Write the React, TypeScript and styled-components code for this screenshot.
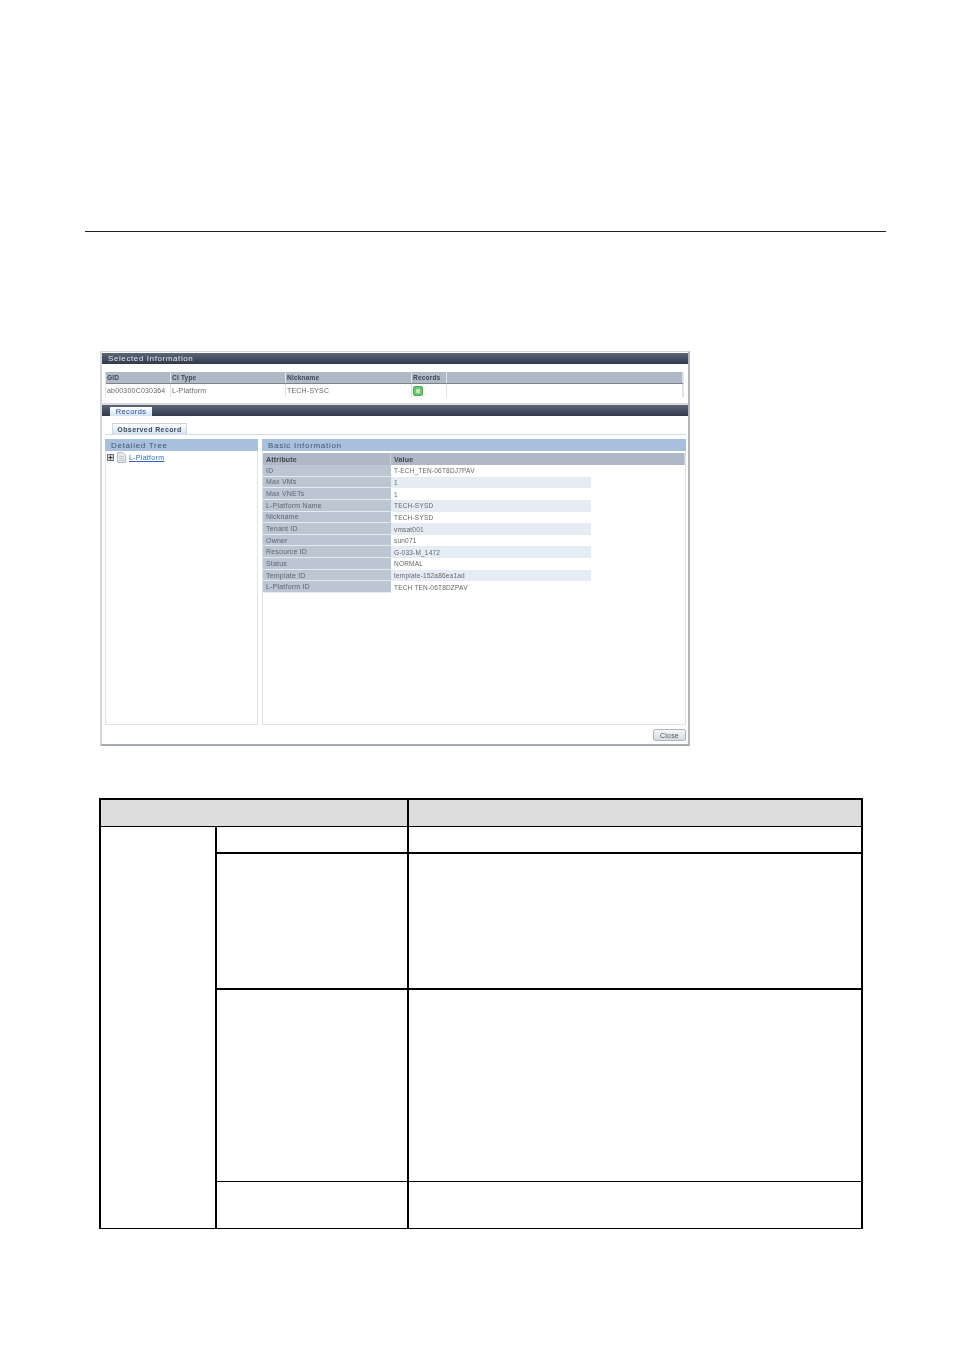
import React from "react";
import styled, { createGlobalStyle } from "styled-components";

const GlobalStyle = createGlobalStyle`
  html, body {
    margin: 0;
    padding: 0;
    background: #fff;
  }
`;

const Page = styled.div`
  width: 954px;
  height: 1350px;
  padding-top: 231px;
  box-sizing: border-box;
  overflow: hidden;
  font-family: "Liberation Sans", Arial, sans-serif;
`;

const Rule = styled.div`
  height: 1px;
  margin: 0 68px 0 85px;
  background: #222;
`;

const Shot = styled.div`
  width: 590px;
  height: 395px;
  margin: 119px 0 0 100px;
  box-sizing: border-box;
  border: 1px solid #d4d6d8;
  border-width: 1px 2px 2px 2px;
  border-bottom-color: #a4aaae;
  border-right-color: #b4b8bb;
  background: #fff;
  display: flex;
  flex-direction: column;
  filter: blur(0.5px);
  color: #555;
  font-size: 7px;
  letter-spacing: 0.2px;
`;

const Bar = styled.div`
  height: 11px;
  flex: none;
  margin-top: 1px;
  display: flex;
  align-items: center;
  background: linear-gradient(#5d6679, #30384b);
`;

const BarTitle = styled.span`
  padding-left: 6px;
  color: #e4e7ee;
  font-size: 8px;
  letter-spacing: 0.6px;
`;

const Selected = styled.div`
  margin: 8px 4px 0 3px;
  height: 25px;
  box-sizing: border-box;
  border: 1px solid #e4e4e4;
  border-top: none;
  flex: none;
`;

const InfoRow = styled.div<{ $head?: boolean }>`
  display: grid;
  grid-template-columns: 65px 115px 126px 35px 1fr;
  align-items: center;
  height: ${(p) => (p.$head ? "11px" : "13px")};
  background: ${(p) => (p.$head ? "#aeb9c5" : "#fff")};
  border-bottom: ${(p) => (p.$head ? "1px solid #79828e" : "none")};
  color: ${(p) => (p.$head ? "#3c4450" : "#666")};
  font-weight: ${(p) => (p.$head ? 700 : 400)};
  font-size: ${(p) => (p.$head ? "6.5px" : "7px")};
`;

const InfoCell = styled.div`
  padding-left: 1px;
  height: 100%;
  display: flex;
  align-items: center;
  border-right: 1px solid #dfe3e7;
  white-space: nowrap;
  overflow: hidden;
  box-sizing: border-box;
`;

const GreenIcon = styled.div`
  width: 10px;
  height: 10px;
  border-radius: 2px;
  background: #6cc86a;
  border: 1px solid #4ba84b;
  box-sizing: border-box;
  display: flex;
  align-items: center;
  justify-content: center;
  &::after {
    content: "";
    width: 4px;
    height: 4px;
    background: #bfeab9;
  }
`;

const Gap = styled.div`
  height: 8px;
  flex: none;
  background: linear-gradient(#fff 6px, #d8dadc 6px);
`;

const RecordsBar = styled(Bar)`
  margin-top: 0;
  padding-left: 8px;
  align-items: flex-end;
`;

const Tab = styled.div`
  width: 42px;
  height: 9px;
  background: linear-gradient(#ffffff, #cfe0f4);
  color: #2e4c86;
  font-size: 7.5px;
  letter-spacing: 0.4px;
  display: flex;
  align-items: center;
  justify-content: center;
`;

const SubTabs = styled.div`
  height: 11px;
  margin: 7px 2px 0 3px;
  padding-left: 7px;
  border-bottom: 1px solid #d3dce6;
  flex: none;
`;

const SubTab = styled.div`
  width: 75px;
  height: 11px;
  box-sizing: border-box;
  border: 1px solid #cdd3da;
  border-bottom: none;
  background: linear-gradient(#fff, #d4e3f5);
  color: #3a4a60;
  font-size: 7px;
  font-weight: 700;
  letter-spacing: 0.4px;
  display: flex;
  align-items: center;
  justify-content: center;
`;

const Split = styled.div`
  height: 286px;
  margin: 4px 2px 0 3px;
  display: grid;
  grid-template-columns: 153px 424px;
  gap: 4px;
  flex: none;
`;

const Pane = styled.div`
  display: flex;
  flex-direction: column;
  border: 1px solid #e2e2e2;
  border-top: none;
  box-sizing: border-box;
`;

const PaneTitle = styled.div`
  height: 12px;
  margin: 0 -1px;
  flex: none;
  padding-left: 6px;
  background: #a8c0de;
  color: #44536a;
  font-size: 8px;
  letter-spacing: 0.7px;
  display: flex;
  align-items: center;
`;

const TreeRow = styled.div`
  display: flex;
  align-items: center;
  height: 10px;
  margin-top: 1px;
  padding-left: 1px;
`;

const TreeLink = styled.span`
  margin-left: 3px;
  color: #3266c4;
  text-decoration: underline;
  font-size: 7px;
  letter-spacing: 0.3px;
`;

const AttrTable = styled.div`
  margin: 2px 0 0 0;
  display: flex;
  flex-direction: column;
`;

const AttrRow = styled.div<{ $head?: boolean }>`
  display: grid;
  grid-template-columns: 128px 1fr;
  height: ${(p) => (p.$head ? "12px" : "11.65px")};
  font-weight: ${(p) => (p.$head ? 700 : 400)};
  background: ${(p) => (p.$head ? "#aeb9c5" : "#fff")};
  color: ${(p) => (p.$head ? "#3c4450" : "#666")};
`;

const AttrName = styled.div`
  background: #bcc6d2;
  border-bottom: 1px solid #e6eaee;
  padding-left: 3px;
  box-sizing: border-box;
  display: flex;
  align-items: center;
  color: #5c6672;
  white-space: nowrap;
`;

const AttrHeadCell = styled.div`
  padding-left: 3px;
  display: flex;
  align-items: center;
  border-right: 1px solid #c8d0d8;
  color: #3c4450;
`;

const AttrValue = styled.div<{ $tint: boolean }>`
  padding-left: 3px;
  box-sizing: border-box;
  display: flex;
  align-items: center;
  white-space: nowrap;
  font-size: 6.5px;
  background: ${(p) =>
    p.$tint ? "linear-gradient(90deg, #e5ecf4 200px, #fff 200px)" : "#fff"};
`;

const Footer = styled.div`
  flex: 1;
  display: flex;
  justify-content: flex-end;
  align-items: flex-start;
  padding: 4px 2px 0 0;
`;

const CloseButton = styled.div`
  width: 33px;
  height: 12px;
  box-sizing: border-box;
  border: 1px solid #b0b6bd;
  border-radius: 2px;
  background: linear-gradient(#f6f7f9, #d3dae3);
  color: #555;
  font-size: 7px;
  display: flex;
  align-items: center;
  justify-content: center;
`;

const SpecTable = styled.table`
  width: 764px;
  margin: 52px 0 0 99px;
  border-collapse: collapse;
  table-layout: fixed;
  border-bottom: 1px solid #000;
`;

const SpecRow = styled.tr<{ $h: number }>`
  height: ${(p) => p.$h}px;
`;

const SpecHead = styled.th`
  padding: 0;
  border: 2px solid #000;
  border-bottom-width: 1px;
  background: #dcdcdc;
`;

const SpecCell = styled.td<{ $top: number; $left: number }>`
  padding: 0;
  border-top: ${(p) => p.$top}px solid #000;
  border-left: ${(p) => p.$left}px solid #000;
  border-right: 2px solid #000;
  border-bottom: 1px solid #000;
`;

const rows = [
  ["ID", "T-ECH_TEN-06T8DJ7PAV"],
  ["Max VMs", "1"],
  ["Max VNETs", "1"],
  ["L-Platform Name", "TECH-SYSD"],
  ["Nickname", "TECH-SYSD"],
  ["Tenant ID", "vmsat001"],
  ["Owner", " sun071"],
  ["Resource ID", "G-033-M_1472"],
  ["Status", "NORMAL"],
  ["Template ID", "template-152a86ea1ad"],
  ["L-Platform ID", "TECH TEN-06T8DZPAV"],
];

const specRows = [
  { h: 27, top: 1 },
  { h: 136, top: 2 },
  { h: 192, top: 2 },
  { h: 47, top: 1 },
];

function PlusBox() {
  return (
    <svg width="7" height="7" viewBox="0 0 7 7">
      <rect width="7" height="7" fill="#6d7278" />
      <rect x="1" y="1" width="5" height="5" fill="#d5d8dc" />
      <path d="M1.5 3.500h4M3.500 1.500v4" stroke="#444" strokeWidth="1" />
    </svg>
  );
}

function DocIcon() {
  return (
    <svg width="9" height="11" viewBox="0 0 9 11" style={{ marginLeft: 3 }}>
      <path d="M.5.5h5.500l2.500 2.500v7.500h-8z" fill="#e6e9ec" stroke="#b8bdc2" />
      <path d="M2 4.500h5M2 6.500h5M2 8.500h5" stroke="#c4c9ce" />
    </svg>
  );
}

export default function App() {
  return (
    <>
      <GlobalStyle />
      <Page>
        <Rule />
        <Shot>
          <Bar>
            <BarTitle>Selected Information</BarTitle>
          </Bar>
          <Selected>
            <InfoRow $head>
              <InfoCell>GID</InfoCell>
              <InfoCell>CI Type</InfoCell>
              <InfoCell>Nickname</InfoCell>
              <InfoCell>Records</InfoCell>
              <InfoCell />
            </InfoRow>
            <InfoRow>
              <InfoCell>ab00300C030364</InfoCell>
              <InfoCell>L-Platform</InfoCell>
              <InfoCell>TECH-SYSC</InfoCell>
              <InfoCell>
                <GreenIcon />
              </InfoCell>
              <InfoCell />
            </InfoRow>
          </Selected>
          <Gap />
          <RecordsBar>
            <Tab>Records</Tab>
          </RecordsBar>
          <SubTabs>
            <SubTab>Observed Record</SubTab>
          </SubTabs>
          <Split>
            <Pane>
              <PaneTitle>Detailed Tree</PaneTitle>
              <TreeRow>
                <PlusBox />
                <DocIcon />
                <TreeLink>L-Platform</TreeLink>
              </TreeRow>
            </Pane>
            <Pane>
              <PaneTitle>Basic Information</PaneTitle>
              <AttrTable>
                <AttrRow $head>
                  <AttrHeadCell>Attribute</AttrHeadCell>
                  <AttrHeadCell>Value</AttrHeadCell>
                </AttrRow>
                {rows.map(([name, value], i) => (
                  <AttrRow key={name}>
                    <AttrName>{name}</AttrName>
                    <AttrValue $tint={i % 2 === 1}>{value}</AttrValue>
                  </AttrRow>
                ))}
              </AttrTable>
            </Pane>
          </Split>
          <Footer>
            <CloseButton>Close</CloseButton>
          </Footer>
        </Shot>
        <SpecTable>
          <colgroup>
            <col style={{ width: 116 }} />
            <col style={{ width: 192 }} />
            <col />
          </colgroup>
          <tbody>
            <SpecRow $h={27}>
              <SpecHead colSpan={2} />
              <SpecHead />
            </SpecRow>
            {specRows.map((r, i) => (
              <SpecRow key={i} $h={r.h}>
                {i === 0 && <SpecCell rowSpan={4} $top={1} $left={2} />}
                <SpecCell $top={r.top} $left={1} />
                <SpecCell $top={r.top} $left={2} />
              </SpecRow>
            ))}
          </tbody>
        </SpecTable>
      </Page>
    </>
  );
}
